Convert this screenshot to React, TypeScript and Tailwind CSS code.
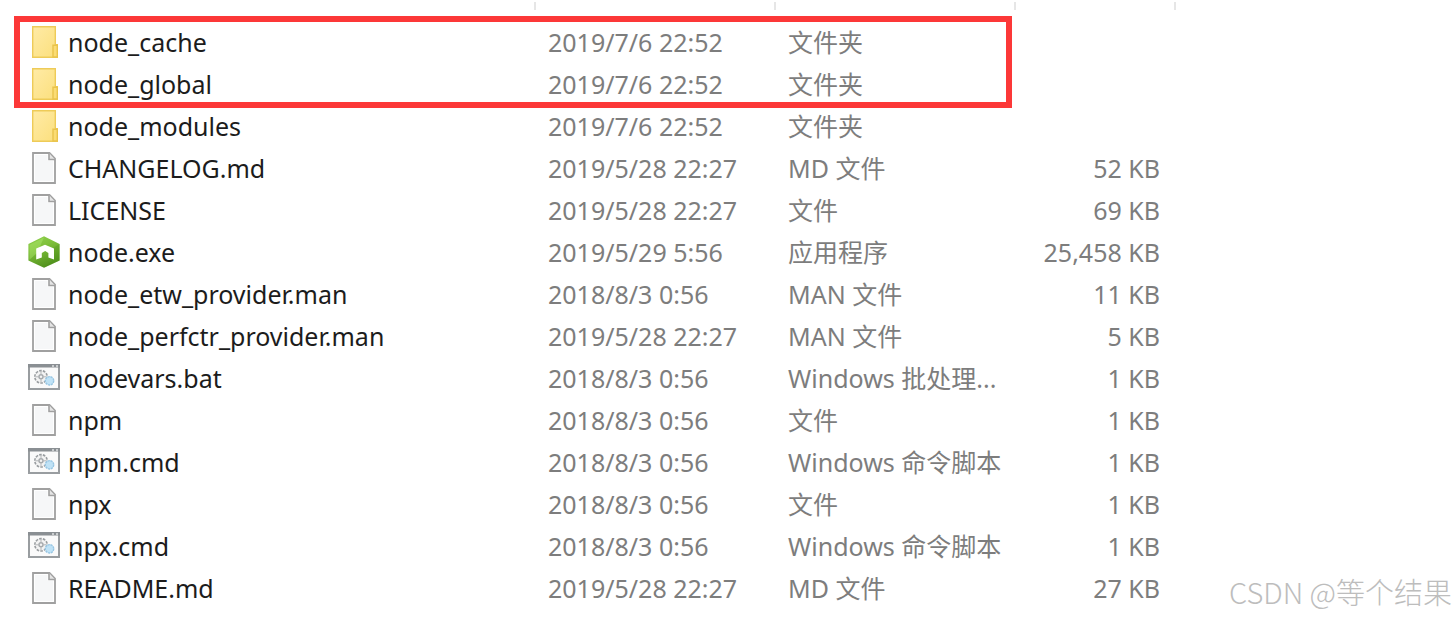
import type { ReactNode } from 'react'

type FileKind = 'folder' | 'file' | 'node' | 'script'

interface FileEntry {
  name: string
  kind: FileKind
  modified: string
  type: string
  size?: string
}

const FILES: FileEntry[] = [
  { name: 'node_cache', kind: 'folder', modified: '2019/7/6 22:52', type: '文件夹' },
  { name: 'node_global', kind: 'folder', modified: '2019/7/6 22:52', type: '文件夹' },
  { name: 'node_modules', kind: 'folder', modified: '2019/7/6 22:52', type: '文件夹' },
  { name: 'CHANGELOG.md', kind: 'file', modified: '2019/5/28 22:27', type: 'MD 文件', size: '52 KB' },
  { name: 'LICENSE', kind: 'file', modified: '2019/5/28 22:27', type: '文件', size: '69 KB' },
  { name: 'node.exe', kind: 'node', modified: '2019/5/29 5:56', type: '应用程序', size: '25,458 KB' },
  { name: 'node_etw_provider.man', kind: 'file', modified: '2018/8/3 0:56', type: 'MAN 文件', size: '11 KB' },
  { name: 'node_perfctr_provider.man', kind: 'file', modified: '2019/5/28 22:27', type: 'MAN 文件', size: '5 KB' },
  { name: 'nodevars.bat', kind: 'script', modified: '2018/8/3 0:56', type: 'Windows 批处理...', size: '1 KB' },
  { name: 'npm', kind: 'file', modified: '2018/8/3 0:56', type: '文件', size: '1 KB' },
  { name: 'npm.cmd', kind: 'script', modified: '2018/8/3 0:56', type: 'Windows 命令脚本', size: '1 KB' },
  { name: 'npx', kind: 'file', modified: '2018/8/3 0:56', type: '文件', size: '1 KB' },
  { name: 'npx.cmd', kind: 'script', modified: '2018/8/3 0:56', type: 'Windows 命令脚本', size: '1 KB' },
  { name: 'README.md', kind: 'file', modified: '2019/5/28 22:27', type: 'MD 文件', size: '27 KB' },
]

const COLUMNS = ['名称', '修改日期', '类型', '大小']

// =====================================================================
// ICONS
// =====================================================================
function FolderIcon() {
  return (
    <svg viewBox="0 0 32 32" className="h-8 w-8" aria-hidden="true">
      <defs>
        <linearGradient id="folder" x1="0" y1="0" x2="1" y2="1">
          <stop offset="0" stopColor="#ffeba6" />
          <stop offset="1" stopColor="#fbdf7c" />
        </linearGradient>
      </defs>
      <path d="M4.7 0.7h22.6v18h2v12.6H4.7z" fill="url(#folder)" stroke="#eecb58" strokeWidth="1.4" />
      <path d="M25 31V19.3h4.3V31z" fill="#fbdc74" stroke="#e9c34b" strokeWidth="1.4" />
    </svg>
  )
}

function PageIcon() {
  return (
    <svg viewBox="0 0 32 32" className="h-8 w-8" aria-hidden="true">
      <path d="M5 1h16.5L27 6.5V31H5z" fill="#f6f7f8" stroke="#a0a0a0" strokeWidth="1.8" />
      <path d="M6.5 2.5h13.5v6h5.5v21h-19z" fill="none" stroke="#fff" />
      <path d="M21 1v6.5h6" fill="#e4e4e4" stroke="#a0a0a0" strokeWidth="1.6" />
    </svg>
  )
}

function NodeIcon() {
  return (
    <svg viewBox="0 0 32 32" className="h-8 w-8" aria-hidden="true">
      <defs>
        <linearGradient id="node" x1="0.2" y1="0" x2="0.6" y2="1">
          <stop offset="0" stopColor="#8dcf4c" />
          <stop offset="0.35" stopColor="#7fc03a" />
          <stop offset="1" stopColor="#4f8f1c" />
        </linearGradient>
      </defs>
      <path d="M16 0.3 31.6 8v16.4L16 31.7 0.4 24.4V8z" fill="url(#node)" />
      <path d="M16 1.5 1.5 8.7v15L9 17z" fill="#b5ee75" opacity="0.4" />
      <path d="M31.6 8v16.4L16 31.7l9-8V12z" fill="#4e931c" opacity="0.3" />
      <path d="M8.2 23.5V12.4L17 8.8l9 3.6v11.1l-5.6-2v-4.6L17.2 15l-3.4 1.9v4.6z" fill="#fff" />
    </svg>
  )
}

function ScriptIcon() {
  return (
    <svg viewBox="0 0 32 32" className="h-8 w-8" aria-hidden="true">
      <path d="M1 3h30v24H1z" fill="#fafafa" stroke="#999da0" strokeWidth="2" />
      <path d="M0 2h32v3.5H0z" fill="#8a8f93" />
      <path d="M24 4h2M28 4h2" stroke="#c9ccce" strokeWidth="2" />
      <circle cx="13" cy="14.8" r="6.2" fill="#f3f3f3" stroke="#999da0" strokeWidth="1.6" strokeDasharray="2.6 1.2" />
      <circle cx="13" cy="14.8" r="2" fill="none" stroke="#a5a9ac" strokeWidth="1.4" />
      <path d="M13 9v3.8M13 16.8v3.7M7.5 14.8H11M15 14.8h3.5" stroke="#b3b6b8" />
      <circle cx="21.5" cy="18.8" r="4.2" fill="#bfe2f6" stroke="#98c6e3" strokeWidth="1.4" strokeDasharray="2.2 0.7" />
    </svg>
  )
}

const ICONS: Record<FileKind, ReactNode> = {
  folder: <FolderIcon />,
  file: <PageIcon />,
  node: <NodeIcon />,
  script: <ScriptIcon />,
}

// =====================================================================
// FILE LIST
// =====================================================================
function FileRow({ file }: { file: FileEntry }) {
  return (
    <tr className="h-[42px] text-[#7d7d7d]">
      <td className="p-0 pb-0.5 pl-7">
        <div className="flex items-center gap-2">
          {ICONS[file.kind]}
          <span className="text-[#1c1c1c]">{file.name}</span>
        </div>
      </td>
      <td className="p-0 pb-0.5 pl-3">{file.modified}</td>
      <td className="p-0 pb-0.5 pl-3">{file.type}</td>
      <td className="p-0 pr-4 pb-0.5 text-right">{file.size}</td>
      <td />
    </tr>
  )
}

export default function App() {
  return (
    <main className="relative min-h-screen overflow-hidden bg-white font-['Noto_Sans','Noto_Sans_CJK_SC',sans-serif] text-[25px] leading-8">
      <table className="w-full table-fixed border-collapse whitespace-nowrap">
        <colgroup>
          <col className="w-[536px]" />
          <col className="w-60" />
          <col className="w-60" />
          <col className="w-40" />
          <col />
        </colgroup>
        <thead>
          <tr className="h-[22px]">
            {COLUMNS.map(label => (
              <th key={label} scope="col" aria-label={label} className="p-0 pt-0.5 align-top">
                <div className="ml-auto h-2 w-0.5 bg-[#e6e6e6]" />
              </th>
            ))}
            <td />
          </tr>
        </thead>
        <tbody>
          {FILES.map(file => (
            <FileRow key={file.name} file={file} />
          ))}
        </tbody>
      </table>

      {/* Highlight around the two new folders */}
      <div className="pointer-events-none absolute top-4 left-3.5 h-[92px] w-[998px] border-6 border-[#fc3838]" />

      {/* Watermark */}
      <p className="absolute right-1 bottom-2.5 font-['Noto_Sans_CJK_SC',sans-serif] text-[29px] leading-9 font-light whitespace-nowrap text-[#bdbdbd]">
        CSDN @等个结果
      </p>
    </main>
  )
}
